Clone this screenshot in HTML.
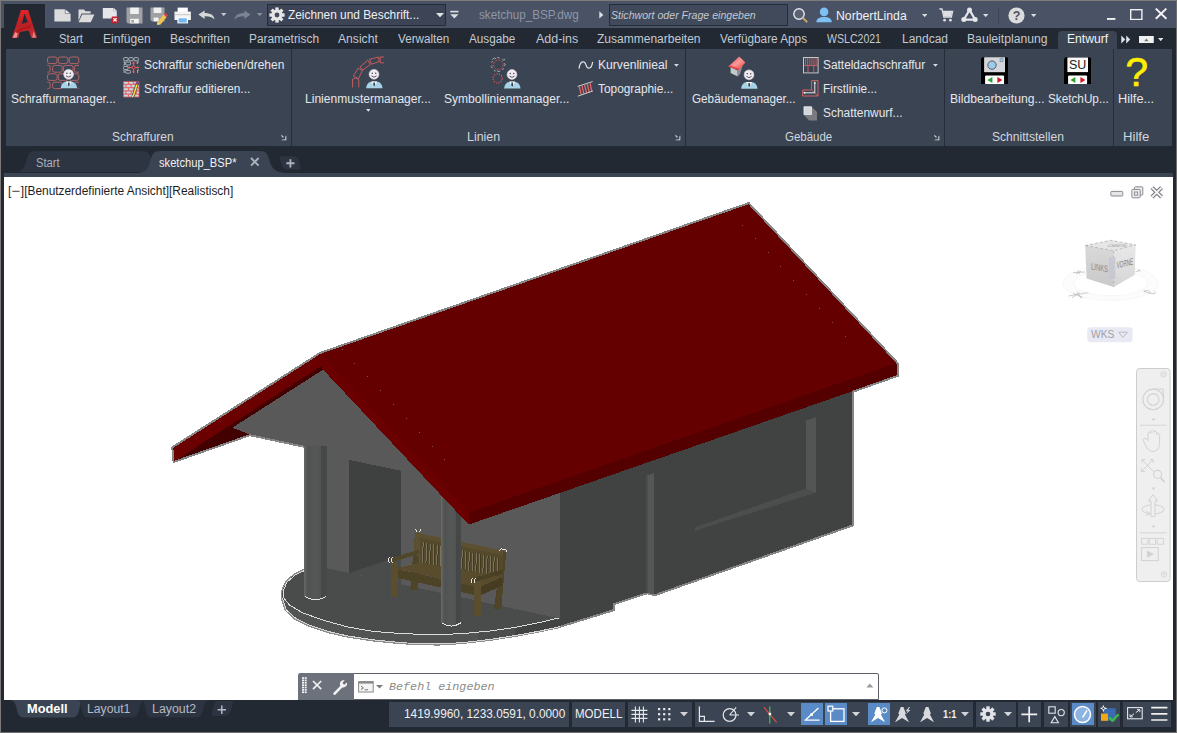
<!DOCTYPE html>
<html><head><meta charset="utf-8"><title>AutoCAD</title>
<style>
html,body{margin:0;padding:0;}
body{width:1177px;height:733px;overflow:hidden;position:relative;background:#222933;font-family:"Liberation Sans",sans-serif;}
#w{position:absolute;left:0;top:0;width:1177px;height:733px;overflow:hidden;}
#w>div,#w>svg,#w>span{position:absolute;}
.t{white-space:nowrap;transform-origin:0 50%;display:block;}
</style></head><body><div id="w">

<div style="left:0px;top:0px;width:1177px;height:733px;background:#707070;"></div>
<div style="left:0px;top:0px;width:1176px;height:1px;background:#7d7c79;"></div>
<div style="left:0px;top:0px;width:1px;height:732px;background:#7b7a78;"></div>
<div style="left:1px;top:1px;width:1175px;height:731px;background:#222933;"></div>
<div style="left:1px;top:1px;width:1175px;height:27px;background:#4a5265;"></div>
<div style="left:4px;top:4px;width:41px;height:24px;background:#222933;"></div>
<div style="left:266.5px;top:4px;width:179.5px;height:22px;background:#3c4455;box-sizing:border-box;border:1px solid #262c37;"></div>
<div style="left:608.5px;top:4px;width:179px;height:22px;background:#414a5b;box-sizing:border-box;border:1px solid #262c37;"></div>
<div style="left:998px;top:7px;width:1px;height:17px;background:#3c4456;"></div>
<div style="left:1058px;top:31px;width:58.8px;height:18px;background:#3b4453;border-radius:4px 4px 0 0;"></div>
<div style="left:6px;top:48.5px;width:1166px;height:97.5px;background:#3b4453;"></div>
<div style="left:291px;top:48.5px;width:1px;height:97.5px;background:#262d39;"></div>
<div style="left:685px;top:48.5px;width:1px;height:97.5px;background:#262d39;"></div>
<div style="left:944px;top:48.5px;width:1px;height:97.5px;background:#262d39;"></div>
<div style="left:1113px;top:48.5px;width:1px;height:97.5px;background:#262d39;"></div>
<div style="left:4px;top:172.5px;width:1169px;height:4.5px;background:#3b4453;"></div>
<svg style="left:14px;top:150px" width="150" height="23" viewBox="0 0 150 23"><path d="M0 22 C8 22 10 19 12 12 C14 4 16 1 22 1 L128 1 C134 1 136 4 138 12 C140 19 142 22 150 22 Z" fill="#2e3542"/></svg>
<svg style="left:138px;top:150px" width="150" height="23" viewBox="0 0 150 23"><path d="M0 23 C8 22 10 19 12 12 C14 4 16 1 22 1 L122 1 C128 1 130 4 132 12 C134 19 138 22 146 23 Z" fill="#3b4453"/></svg>
<svg style="left:277px;top:156px" width="26" height="14" viewBox="0 0 26 14"><path d="M2 0.2 L17 0.2 C21 0.2 23 7 24 13.4 L9 13.4 C4.5 13.4 4 5 2 0.2 Z" fill="#2e3542"/></svg>
<div style="left:4px;top:177px;width:1169px;height:523px;background:#ffffff;"></div>
<svg style="left:10px;top:700px" width="76" height="18" viewBox="0 0 76 18"><path d="M0 0 L76 0 C71 0 70 6 69 10 C68 15 66 17.5 62 17.5 L14 17.5 C10 17.5 8 15 7 10 C6 6 5 0 0 0 Z" fill="#3b4453"/></svg>
<svg style="left:74px;top:700px" width="76" height="18" viewBox="0 0 76 18"><path d="M4 0 L72 0 C67 0 66 6 65 10 C64 15 62 17.5 58 17.5 L14 17.5 C10 17.5 9 15 8 10 C7 6 6 0 4 0 Z" fill="#2d3441"/></svg>
<svg style="left:138px;top:700px" width="76" height="18" viewBox="0 0 76 18"><path d="M4 0 L72 0 C67 0 66 6 65 10 C64 15 62 17.5 58 17.5 L14 17.5 C10 17.5 9 15 8 10 C7 6 6 0 4 0 Z" fill="#2d3441"/></svg>
<svg style="left:208px;top:701px" width="26" height="16" viewBox="0 0 26 16"><path d="M8 0 L25 0 C24 8 22 15 17 15 L3 15 C5 12 5 3 8 0 Z" fill="#2d3441"/></svg>
<div style="left:388.9px;top:702px;width:179.8px;height:24.5px;background:#3b4453;"></div>
<div style="left:571.9px;top:702px;width:53.1px;height:24.5px;background:#3b4453;"></div>
<div style="left:628px;top:702px;width:63.7px;height:24.5px;background:#3b4453;"></div>
<div style="left:694.8px;top:702px;width:169.2px;height:24.5px;background:#3b4453;"></div>
<div style="left:864.3px;top:702px;width:108.3px;height:24.5px;background:#3b4453;"></div>
<div style="left:975.8px;top:702px;width:39.9px;height:24.5px;background:#3b4453;"></div>
<div style="left:1017.5px;top:702px;width:23.5px;height:24.5px;background:#3b4453;"></div>
<div style="left:1044px;top:702px;width:24.2px;height:24.5px;background:#3b4453;"></div>
<div style="left:1069.5px;top:702px;width:26.5px;height:24.5px;background:#3b4453;"></div>
<div style="left:1097.8px;top:702px;width:22.2px;height:24.5px;background:#3b4453;"></div>
<div style="left:1123px;top:702px;width:48px;height:24.5px;background:#3b4453;"></div>
<div style="left:801px;top:702.7px;width:21.8px;height:22.5px;background:#5a8bc6;"></div>
<div style="left:824.7px;top:702.7px;width:22.3px;height:22.5px;background:#5a8bc6;"></div>
<div style="left:867.5px;top:702.7px;width:22.7px;height:22.5px;background:#5a8bc6;"></div>
<div style="left:1071.7px;top:702.7px;width:22.6px;height:22.5px;background:#5a8bc6;"></div>
<div style="left:298px;top:672.8px;width:580.5px;height:27.2px;background:#ffffff;box-sizing:border-box;border:1px solid #5c5f66;border-radius:3px 2px 0 0;"></div>
<div style="left:298px;top:672.8px;width:55.8px;height:27.2px;background:#6c717b;border-radius:3px 0 0 0;"></div>
<svg style="left:0;top:0" width="1177" height="733" viewBox="0 0 1177 733" shape-rendering="crispEdges">
<polygon points="282,590 282.3,597.8 286.2,609.5 295.9,618.5 308.9,625 328.3,631.5 347.8,636 373.7,639.9 399.6,642.5 420,643.8 440,644 462.4,642.6 490,639.5 514.9,635.6 540,631 561,626.4 561,617 561,617.4 540,622.5 514.9,627.4 490,631 462.4,633.6 440,634.6 420,634.3 399.6,633.4 373.7,631.5 347.8,627 321.9,619.8 302.4,612.7 289.4,604.9 283.6,597.8 283,591.3 286.9,582.2 295.9,574.4 306.9,569.5" fill="#525454" />
<polygon points="478,632.4 514.9,627.4 514.9,635.6 478,641" fill="#4c4e4e" />
<polygon points="514.9,627.4 540,622.5 561,617.4 561,626.4 540,631 514.9,635.6" fill="#424444" />
<polygon points="306.9,569.5 295.9,574.4 286.9,582.2 283,591.3 283.6,597.8 289.4,604.9 302.4,612.7 321.9,619.8 347.8,627 373.7,631.5 399.6,633.4 420,634.3 440,634.6 462.4,633.6 490,631 514.9,627.4 540,622.5 561,617.4 561,560 306.9,560" fill="#4a4c4c" />
<polygon points="305.79999999999995,568.7 294.79999999999995,573.6 285.79999999999995,581.4000000000001 281.9,590.5 281.2,594 283.6,597.8 283,591.3 286.9,582.2 295.9,574.4 306.9,569.5" fill="#4a4c4c" />
<polyline points="305.79999999999995,568.7 294.79999999999995,573.6 285.79999999999995,581.4000000000001 281.9,590.5 281.2,594 281.40000000000003,598.6999999999999 285.3,610.4 295.0,619.4 308.0,625.9 327.40000000000003,632.4 346.90000000000003,636.9 372.8,640.8 398.70000000000005,643.4 419.1,644.6999999999999 439.1,644.9 461.5,643.5 489.1,640.4 514.0,636.5 539.1,631.9 560.1,627.3" fill="none" stroke="#8c8c8c" stroke-width="1.3" />
<polyline points="282.3,597.8 286.2,609.5 295.9,618.5 308.9,625 328.3,631.5 347.8,636 373.7,639.9 399.6,642.5 420,643.8 440,644 462.4,642.6 490,639.5 514.9,635.6 540,631 561,626.4" fill="none" stroke="#d8d8d8" stroke-width="1" />
<polyline points="306.9,569.5 295.9,574.4 286.9,582.2 283,591.3 283.6,597.8 289.4,604.9 302.4,612.7 321.9,619.8 347.8,627 373.7,631.5 399.6,633.4 420,634.3 440,634.6 462.4,633.6 490,631 514.9,627.4 540,622.5 561,617.4" fill="none" stroke="#dcdcdc" stroke-width="1" />
<polygon points="322.5,367.5 230.5,427.5 249.9,434.8 304,446.4 304,563.3 559.9,618.6 559.9,470 468,500" fill="#595959" />
<polygon points="349.1,459.9 400.8,470.7 400.8,555.8 349.1,573" fill="#3f4141" />
<polygon points="349.1,573 400.8,555.8 400.8,584.3" fill="#4a4c4c" />
<polygon points="559.9,480 853.6,380 853.6,524.9 654.8,594.9 647.3,592.9 613.6,603.9 613.6,609.9 559.9,626.3" fill="#414343" />
<polyline points="853.3,391 853.3,525.2 654.8,595.2 647.3,593.2 613.6,604.2 613.6,610.2 559.9,626.8" fill="none" stroke="#858585" stroke-width="2" />
<polygon points="647.3,475.5 654.3,473.2 654.3,594.6 647.3,592.7" fill="#555757" />
<polygon points="646.3,476 647.5,475.5 647.5,592.9 646.3,593.3" fill="#4b4d4d" />
<polygon points="806.1,420.3 815.8,417.2 815.8,492.6 806.1,489.6" fill="#535555" />
<polygon points="806.1,488.6 815.8,492.6 694.9,530.8 694.9,527.4" fill="#4c4e4e" />
<defs><linearGradient id="cg" x1="0" x2="1" y1="0" y2="0"><stop offset="0" stop-color="#686a6a"/><stop offset="0.07" stop-color="#5a5c5c"/><stop offset="0.18" stop-color="#505252"/><stop offset="0.45" stop-color="#565858"/><stop offset="0.74" stop-color="#525454"/><stop offset="0.76" stop-color="#454747"/><stop offset="1" stop-color="#474949"/></linearGradient></defs>
<path d="M304.2 446.4 L326.6 446.4 L326.6 596.5 Q315.4 603.5 304.2 596.5 Z" fill="url(#cg)"/>
<path d="M304.8 596.3 Q315.4 603.3 326.2 596.3" fill="none" stroke="#e4e4e4" stroke-width="1"/>
<polygon points="415.1,532.2 420.8,533.4 417.5,590.2 410.2,589.4" fill="#4e4428" />
<polygon points="501.8,551 506.2,552 501.2,609.5 494,608.5" fill="#4e4428" />
<polygon points="415.1,532.2 420.8,533.4 419.6,556 413.6,555" fill="#5c5030" />
<polygon points="419.5,537.5 502.5,554.8 502.5,578 419.5,563.5" fill="#55492b" />
<line x1="423.2" y1="542.3" x2="422.4" y2="562.6" stroke="#77735f" stroke-width="1"/>
<line x1="424.2" y1="542.3" x2="423.4" y2="562.6" stroke="#443b21" stroke-width="1"/>
<line x1="426.8" y1="543.0" x2="425.9" y2="563.3" stroke="#77735f" stroke-width="1"/>
<line x1="427.8" y1="543.0" x2="426.9" y2="563.3" stroke="#443b21" stroke-width="1"/>
<line x1="430.3" y1="543.8" x2="429.5" y2="563.9" stroke="#77735f" stroke-width="1"/>
<line x1="431.3" y1="543.8" x2="430.5" y2="563.9" stroke="#443b21" stroke-width="1"/>
<line x1="433.9" y1="544.5" x2="433.1" y2="564.5" stroke="#77735f" stroke-width="1"/>
<line x1="434.9" y1="544.5" x2="434.1" y2="564.5" stroke="#443b21" stroke-width="1"/>
<line x1="437.4" y1="545.2" x2="436.6" y2="565.1" stroke="#77735f" stroke-width="1"/>
<line x1="438.4" y1="545.2" x2="437.6" y2="565.1" stroke="#443b21" stroke-width="1"/>
<line x1="441.0" y1="546.0" x2="440.2" y2="565.7" stroke="#77735f" stroke-width="1"/>
<line x1="442.0" y1="546.0" x2="441.2" y2="565.7" stroke="#443b21" stroke-width="1"/>
<line x1="444.5" y1="546.7" x2="443.7" y2="566.4" stroke="#77735f" stroke-width="1"/>
<line x1="445.5" y1="546.7" x2="444.7" y2="566.4" stroke="#443b21" stroke-width="1"/>
<line x1="448.1" y1="547.4" x2="447.3" y2="567.0" stroke="#77735f" stroke-width="1"/>
<line x1="449.1" y1="547.4" x2="448.3" y2="567.0" stroke="#443b21" stroke-width="1"/>
<line x1="451.6" y1="548.2" x2="450.8" y2="567.6" stroke="#77735f" stroke-width="1"/>
<line x1="452.6" y1="548.2" x2="451.8" y2="567.6" stroke="#443b21" stroke-width="1"/>
<line x1="455.2" y1="548.9" x2="454.4" y2="568.2" stroke="#77735f" stroke-width="1"/>
<line x1="456.2" y1="548.9" x2="455.4" y2="568.2" stroke="#443b21" stroke-width="1"/>
<line x1="458.7" y1="549.7" x2="457.9" y2="568.8" stroke="#77735f" stroke-width="1"/>
<line x1="459.7" y1="549.7" x2="458.9" y2="568.8" stroke="#443b21" stroke-width="1"/>
<line x1="462.3" y1="550.4" x2="461.5" y2="569.5" stroke="#77735f" stroke-width="1"/>
<line x1="463.3" y1="550.4" x2="462.5" y2="569.5" stroke="#443b21" stroke-width="1"/>
<line x1="465.8" y1="551.1" x2="465.0" y2="570.1" stroke="#77735f" stroke-width="1"/>
<line x1="466.8" y1="551.1" x2="466.0" y2="570.1" stroke="#443b21" stroke-width="1"/>
<line x1="469.4" y1="551.9" x2="468.6" y2="570.7" stroke="#77735f" stroke-width="1"/>
<line x1="470.4" y1="551.9" x2="469.6" y2="570.7" stroke="#443b21" stroke-width="1"/>
<line x1="472.9" y1="552.6" x2="472.1" y2="571.3" stroke="#77735f" stroke-width="1"/>
<line x1="473.9" y1="552.6" x2="473.1" y2="571.3" stroke="#443b21" stroke-width="1"/>
<line x1="476.5" y1="553.4" x2="475.7" y2="571.9" stroke="#77735f" stroke-width="1"/>
<line x1="477.5" y1="553.4" x2="476.7" y2="571.9" stroke="#443b21" stroke-width="1"/>
<line x1="480.0" y1="554.1" x2="479.2" y2="572.6" stroke="#77735f" stroke-width="1"/>
<line x1="481.0" y1="554.1" x2="480.2" y2="572.6" stroke="#443b21" stroke-width="1"/>
<line x1="483.6" y1="554.8" x2="482.8" y2="573.2" stroke="#77735f" stroke-width="1"/>
<line x1="484.6" y1="554.8" x2="483.8" y2="573.2" stroke="#443b21" stroke-width="1"/>
<line x1="487.1" y1="555.6" x2="486.3" y2="573.8" stroke="#77735f" stroke-width="1"/>
<line x1="488.1" y1="555.6" x2="487.3" y2="573.8" stroke="#443b21" stroke-width="1"/>
<line x1="490.7" y1="556.3" x2="489.9" y2="574.4" stroke="#77735f" stroke-width="1"/>
<line x1="491.7" y1="556.3" x2="490.9" y2="574.4" stroke="#443b21" stroke-width="1"/>
<line x1="494.2" y1="557.1" x2="493.4" y2="575.1" stroke="#77735f" stroke-width="1"/>
<line x1="495.2" y1="557.1" x2="494.4" y2="575.1" stroke="#443b21" stroke-width="1"/>
<line x1="497.8" y1="557.8" x2="497.0" y2="575.7" stroke="#77735f" stroke-width="1"/>
<line x1="498.8" y1="557.8" x2="498.0" y2="575.7" stroke="#443b21" stroke-width="1"/>
<polygon points="418.7,533.2 503.4,550.6 503.4,555 418.7,537.6" fill="#5c5030" />
<polygon points="396,568.5 419.5,562.5 502,577.3 479,587.4" fill="#584c2c" />
<polygon points="395.8,568.8 479,587.3 479,596 395.8,577.5" fill="#4c4226" />
<polygon points="479,587.3 501.5,577.5 501.5,586 479,596" fill="#463c22" />
<polygon points="390.7,558.3 418.7,549.8 418.7,554 390.7,562.6" fill="#50462a" />
<polygon points="391.2,561.5 397.9,561.5 397.9,596.8 391.2,596.8" fill="#5a4e2e" />
<polygon points="471.7,578.5 503.2,569.2 503.2,573.5 471.7,583" fill="#4a4026" />
<polygon points="474,581 481,581 481,616.2 474,616.2" fill="#5a4e2e" />
<path d="M389.5 557.5 q-2.5 2.5 0 5.5 M392.5 557.5 q-2.5 2.5 0 5.5" fill="none" stroke="#e8e4d8" stroke-width="1"/>
<path d="M472.5 578.0 q-2.5 2.5 0 5.5 M475.5 578.0 q-2.5 2.5 0 5.5" fill="none" stroke="#e8e4d8" stroke-width="1"/>
<path d="M415.5 529.5 l1.5 2.5 M420.8 529.5 l-1.5 2.5" fill="none" stroke="#e8e4d8" stroke-width="1"/>
<path d="M499.5 551 q1.5 -3.5 3.5 -1 q2 -2.5 3.8 1.5" fill="none" stroke="#e8e4d8" stroke-width="1"/>
<path d="M441.4 480 L461.2 480 L461.2 623 Q451.3 629.6 441.4 623 Z" fill="url(#cg)"/>
<path d="M441.9 622.8 Q451.3 629.4 460.8 622.8" fill="none" stroke="#e4e4e4" stroke-width="1"/>
<polygon points="173.7,461.5 320,360 323.3,369.5 232.4,427.7 249.9,434.6" fill="#430000" />
<polygon points="320.5,353 171.7,447.4 173.7,461.8 321,366.1" fill="#6a0000" />
<polygon points="319,353.2 324,351.6 473,511 468.7,524.6 323.3,369.9 320.6,366" fill="#6a0000" />
<polygon points="468.7,510.5 897,360.6 898,375.4 468.7,524.6" fill="#550000" />
<polygon points="320,353.3 748.7,203.3 897,362.8 468.7,512.5" fill="#640000" />
<polyline points="171.9,447.6 320,353 748.7,203.1 896.5,361.8 897.8,363.9 897.8,375.8 853.6,391.5" fill="none" stroke="#868686" stroke-width="2" />
<polyline points="172.2,446.5 173.6,462 249.9,435.2 304,446.8" fill="none" stroke="#868686" stroke-width="2" />
<rect x="741.7" y="224.5" width="1" height="1" fill="#7c5252"/>
<rect x="341.6" y="348.7" width="1" height="1" fill="#7c5252"/>
<rect x="754.6" y="238.4" width="1" height="1" fill="#7c5252"/>
<rect x="354.4" y="362.5" width="1" height="1" fill="#7c5252"/>
<rect x="767.5" y="252.4" width="1" height="1" fill="#7c5252"/>
<rect x="367.3" y="376.4" width="1" height="1" fill="#7c5252"/>
<rect x="780.4" y="266.4" width="1" height="1" fill="#7c5252"/>
<rect x="380.1" y="390.2" width="1" height="1" fill="#7c5252"/>
<rect x="793.3" y="280.3" width="1" height="1" fill="#7c5252"/>
<rect x="393.0" y="404.1" width="1" height="1" fill="#7c5252"/>
<rect x="806.2" y="294.2" width="1" height="1" fill="#7c5252"/>
<rect x="405.8" y="417.9" width="1" height="1" fill="#7c5252"/>
<rect x="819.0" y="308.2" width="1" height="1" fill="#7c5252"/>
<rect x="418.6" y="431.7" width="1" height="1" fill="#7c5252"/>
<rect x="831.9" y="322.1" width="1" height="1" fill="#7c5252"/>
<rect x="431.5" y="445.6" width="1" height="1" fill="#7c5252"/>
<rect x="844.8" y="336.1" width="1" height="1" fill="#7c5252"/>
<rect x="444.3" y="459.4" width="1" height="1" fill="#7c5252"/>
</svg>
<svg style="left:8px;top:6px" width="34" height="36" viewBox="0 0 34 36" >
<defs><linearGradient id="ag" x1="0" x2="0" y1="0" y2="1"><stop offset="0" stop-color="#e42428"/><stop offset="0.55" stop-color="#b82024"/><stop offset="1" stop-color="#c83438"/></linearGradient></defs>
<path d="M13 4.1 L20.1 4.1 L29.1 31.7 L23.3 31.7 L20.7 24.4 L11.7 25.9 L10.3 31.7 L4 31.7 Z" fill="url(#ag)"/>
<path d="M16.55 7.6 L13.8 18 L19.8 16.1 Z" fill="#222933"/>
<path d="M8.8 24.6 C12 22.2 18 20.6 22 19.6 L22.9 22.2 C18 23 12.6 24.6 8.2 27 Z" fill="#b2191d"/>
<path d="M4.6 31.7 L8.6 31.7 L9.6 27.6 L7.4 26 Z" fill="#f2a4a4" opacity="0.85"/><path d="M24.2 31.7 L28 31.7 L25.6 25 Z" fill="#ee9494" opacity="0.8"/>
</svg>
<svg style="left:53.5px;top:8.5px" width="17" height="13" viewBox="0 0 17 13" ><path d="M0.4 0.3 L11.2 0.3 L16.6 4.4 L16.6 12.6 L0.4 12.6 Z" fill="#dcdcdc"/><path d="M11.2 0.3 L11.2 4.4 L16.6 4.4 Z" fill="#f6f6f6" stroke="#4a5265" stroke-width="0.6"/></svg>
<svg style="left:77.5px;top:8.5px" width="17" height="14" viewBox="0 0 17 14" ><path d="M0.5 0.4 L6 0.4 L7.5 2.3 L12.6 2.3 L12.6 4.6 L3.5 4.6 L0.5 12 Z" fill="#dcdcdc"/><path d="M4.2 5.6 L16.4 5.6 L12.8 13.2 L0.6 13.2 Z" fill="#dcdcdc"/></svg>
<svg style="left:101.5px;top:6.5px" width="18" height="17" viewBox="0 0 18 17" ><path d="M0.8 1 L11.5 1 L14.8 4 L14.8 11.5 L0.8 11.5 Z" fill="#e4e6ea"/><path d="M11.5 1 L11.5 4 L14.8 4 Z" fill="#ffffff" stroke="#8890a0" stroke-width="0.5"/>
<rect x="9.6" y="9.4" width="6.8" height="6.8" rx="1" fill="#c8202a"/><path d="M11.4 11.2 L14.6 14.4 M14.6 11.2 L11.4 14.4" stroke="#ffffff" stroke-width="1.3"/></svg>
<svg style="left:125.5px;top:6.5px" width="17" height="17" viewBox="0 0 17 17" ><path d="M0.5 0.6 L16.5 0.6 L16.5 16.4 L2 16.4 L0.5 14.9 Z" fill="#9fa1a5"/><rect x="4.2" y="0.6" width="8.6" height="6.4" fill="#f0f0f0"/><rect x="4.2" y="11.8" width="8.6" height="4.6" fill="#f4f4f4"/><rect x="5.4" y="13" width="2.6" height="2.6" fill="#9fa1a5"/></svg>
<svg style="left:149.5px;top:6.5px" width="18" height="18" viewBox="0 0 18 18" ><path d="M0.5 0.6 L14.5 0.6 L14.5 14.4 L2 14.4 L0.5 12.9 Z" fill="#9fa1a5"/><rect x="3.6" y="0.6" width="7.8" height="5.4" fill="#f0f0f0"/><rect x="3.6" y="10.6" width="5" height="3.8" fill="#f4f4f4"/>
<path d="M7.6 15.3 L13.6 7.6 L16.6 10 L10.6 17.4 L7.2 17.8 Z" fill="#f0c44c"/><path d="M13.6 7.6 L15 5.9 L17.9 8.3 L16.6 10 Z" fill="#e8404a"/><path d="M7.6 15.3 L7.2 17.8 L9.6 17.2 Z" fill="#f4e8d0"/></svg>
<svg style="left:173.5px;top:6.5px" width="18" height="17" viewBox="0 0 18 17" ><rect x="3.6" y="0.6" width="10.2" height="5" fill="#ffffff"/><path d="M0.5 4.6 L16.9 4.6 L16.9 13 L0.5 13 Z" fill="#f4f4f4"/><rect x="0.5" y="7.2" width="16.4" height="1" fill="#c8c8c8"/><rect x="3.4" y="10.4" width="10.6" height="6" fill="#ffffff"/><rect x="4.6" y="11.2" width="8.2" height="4.4" fill="#74b8f0"/></svg>
<svg style="left:197.5px;top:9.5px" width="17" height="10" viewBox="0 0 17 10" ><path d="M0.4 4.6 L6.6 0.4 L6.6 3 C12.5 3 16 5 16.5 9.6 C14 6.6 11 6.2 6.6 6.3 L6.6 8.9 Z" fill="#d8d8d8"/></svg>
<svg style="left:220.9px;top:12.700000000000001px" width="5.4" height="3.2" viewBox="0 0 5.4 3.2" ><path d="M0 0 L5.4 0 L2.7 3.2 Z" fill="#c4c8d0"/></svg>
<svg style="left:233.5px;top:9.5px" width="17" height="10" viewBox="0 0 17 10" ><path d="M16.6 4.6 L10.4 0.4 L10.4 3 C4.5 3 1 5 0.5 9.6 C3 6.6 6 6.2 10.4 6.3 L10.4 8.9 Z" fill="#7c8392"/></svg>
<svg style="left:256.8px;top:12.700000000000001px" width="5.4" height="3.2" viewBox="0 0 5.4 3.2" ><path d="M0 0 L5.4 0 L2.7 3.2 Z" fill="#8a91a0"/></svg>
<svg style="left:269px;top:6.5px" width="16" height="16" viewBox="0 0 16 16" ><g transform="translate(8,8)"><rect x="-1.7" y="-7.6" width="3.4" height="3.6" transform="rotate(0)" fill="#e6e6e6"/><rect x="-1.7" y="-7.6" width="3.4" height="3.6" transform="rotate(45)" fill="#e6e6e6"/><rect x="-1.7" y="-7.6" width="3.4" height="3.6" transform="rotate(90)" fill="#e6e6e6"/><rect x="-1.7" y="-7.6" width="3.4" height="3.6" transform="rotate(135)" fill="#e6e6e6"/><rect x="-1.7" y="-7.6" width="3.4" height="3.6" transform="rotate(180)" fill="#e6e6e6"/><rect x="-1.7" y="-7.6" width="3.4" height="3.6" transform="rotate(225)" fill="#e6e6e6"/><rect x="-1.7" y="-7.6" width="3.4" height="3.6" transform="rotate(270)" fill="#e6e6e6"/><rect x="-1.7" y="-7.6" width="3.4" height="3.6" transform="rotate(315)" fill="#e6e6e6"/><circle r="5.6" fill="#e6e6e6"/><circle r="2.4" fill="#434b5d"/></g></svg>
<svg style="left:436.2px;top:13.100000000000001px" width="8" height="4.4" viewBox="0 0 8 4.4" ><path d="M0 0 L8 0 L4.0 4.4 Z" fill="#e0e2e6"/></svg>
<svg style="left:449.5px;top:10px" width="9" height="9" viewBox="0 0 9 9" ><rect x="0.3" y="0.8" width="8.2" height="1.6" fill="#dcdfe4"/><path d="M0.3 4.2 L8.5 4.2 L4.4 8.4 Z" fill="#dcdfe4"/></svg>
<svg style="left:598.8px;top:11px" width="5" height="8" viewBox="0 0 5 8" ><path d="M0.3 0.3 L4.3 3.9 L0.3 7.5 Z" fill="#dfe2e6"/></svg>
<svg style="left:792px;top:7px" width="17" height="17" viewBox="0 0 17 17" ><circle cx="7" cy="7" r="5.2" fill="#5a6274" stroke="#e4e6ea" stroke-width="1.4"/><path d="M10.8 10.8 L15.2 15.2" stroke="#c9a06a" stroke-width="2"/></svg>
<svg style="left:816px;top:6.5px" width="16" height="17" viewBox="0 0 16 17" ><circle cx="8.1" cy="4.9" r="4.3" fill="#7dc0f4"/><path d="M0.3 15.2 C0.5 11.4 3.4 9.9 8.1 9.9 C12.8 9.9 15.6 11.4 15.8 15.2 Z" fill="#7dc0f4"/></svg>
<svg style="left:921.6999999999999px;top:13.9px" width="5.4" height="3.2" viewBox="0 0 5.4 3.2" ><path d="M0 0 L5.4 0 L2.7 3.2 Z" fill="#d8dbe0"/></svg>
<svg style="left:938.5px;top:8px" width="15" height="15" viewBox="0 0 15 15" ><path d="M0.4 1 L3 1 L4.8 9 L12.4 9 L13.6 3.4 L3.6 3.4" fill="none" stroke="#dcdfe4" stroke-width="1.3"/><path d="M4 4 L13 4 L12 8.4 L5 8.4 Z" fill="#dcdfe4"/><circle cx="5.6" cy="12.2" r="1.4" fill="#dcdfe4"/><circle cx="11.4" cy="12.2" r="1.4" fill="#dcdfe4"/></svg>
<svg style="left:961px;top:7px" width="17" height="16" viewBox="0 0 17 16" ><path d="M8.5 3 L2.8 12.6 L14.2 12.6 Z" fill="none" stroke="#e4e6ea" stroke-width="2.2"/><circle cx="8.5" cy="3" r="2.5" fill="#e4e6ea"/><circle cx="2.8" cy="12.6" r="2.5" fill="#e4e6ea"/><circle cx="14.2" cy="12.6" r="2.5" fill="#e4e6ea"/></svg>
<svg style="left:982.8px;top:13.700000000000001px" width="5.4" height="3.2" viewBox="0 0 5.4 3.2" ><path d="M0 0 L5.4 0 L2.7 3.2 Z" fill="#d8dbe0"/></svg>
<svg style="left:1007.5px;top:6.6px" width="17" height="17" viewBox="0 0 17 17" ><circle cx="8.5" cy="8.5" r="8.1" fill="#dcdcdc"/><text x="8.5" y="13" text-anchor="middle" font-family="Liberation Sans" font-weight="bold" font-size="12.5" fill="#4a5265">?</text></svg>
<svg style="left:1030.8999999999999px;top:13.700000000000001px" width="5.4" height="3.2" viewBox="0 0 5.4 3.2" ><path d="M0 0 L5.4 0 L2.7 3.2 Z" fill="#d8dbe0"/></svg>
<svg style="left:1107px;top:17.5px" width="9" height="2.2" viewBox="0 0 9 2.2" ><rect width="8.4" height="1.9" fill="#f0f0f0"/></svg>
<svg style="left:1129.8px;top:9px" width="13" height="11.4" viewBox="0 0 13 11.4" ><rect x="0.7" y="0.7" width="11.2" height="9.8" fill="none" stroke="#f0f0f0" stroke-width="1.4"/></svg>
<svg style="left:1154.5px;top:8px" width="12.4" height="11.6" viewBox="0 0 12.4 11.6" ><path d="M0.8 0.6 L11.4 10.8 M11.4 0.6 L0.8 10.8" stroke="#f4f4f4" stroke-width="1.95"/></svg>
<svg style="left:1121px;top:34.6px" width="10" height="9" viewBox="0 0 10 9" ><path d="M0.3 0.4 L4.3 4.4 L0.3 8.4 Z M5.2 0.4 L9.2 4.4 L5.2 8.4 Z" fill="#dfe2e6"/></svg>
<svg style="left:1139px;top:35.6px" width="15" height="7.4" viewBox="0 0 15 7.4" ><rect width="14.8" height="7.2" fill="#f0f0f0"/><path d="M5.2 5.2 L9.6 5.2 L7.4 2.4 Z" fill="#70747c"/></svg>
<svg style="left:1157.8px;top:37.9px" width="5.4" height="3.2" viewBox="0 0 5.4 3.2" ><path d="M0 0 L5.4 0 L2.7 3.2 Z" fill="#dfe2e6"/></svg>
<svg style="left:46px;top:55px" width="34" height="35" viewBox="0 0 34 35" ><rect x="1.5" y="2.0" width="9.6" height="6.6" rx="2" fill="none" stroke="#c66a68" stroke-width="0.85"/><rect x="12.3" y="2.0" width="9.6" height="6.6" rx="2" fill="none" stroke="#c66a68" stroke-width="0.85"/><rect x="23.2" y="2.0" width="9.6" height="6.6" rx="2" fill="none" stroke="#c66a68" stroke-width="0.85"/><rect x="6.6" y="10.399999999999999" width="9.6" height="6.8" rx="2" fill="none" stroke="#c66a68" stroke-width="0.85"/><rect x="17.4" y="10.399999999999999" width="9.6" height="6.8" rx="2" fill="none" stroke="#c66a68" stroke-width="0.85"/><path d="M1.3 10.399999999999999 L2.4 10.399999999999999 Q4.2 10.399999999999999 4.2 12.2 L4.2 15.399999999999999 Q4.2 17.2 2.4 17.2 L1.3 17.2" fill="none" stroke="#c66a68" stroke-width="0.85"/><path d="M33 10.399999999999999 L30.2 10.399999999999999 Q28.4 10.399999999999999 28.4 12.2 L28.4 15.399999999999999 Q28.4 17.2 30.2 17.2 L33 17.2" fill="none" stroke="#c66a68" stroke-width="0.85"/><rect x="1.5" y="18.8" width="9.6" height="6.6" rx="2" fill="none" stroke="#c66a68" stroke-width="0.85"/><rect x="12.3" y="18.8" width="9.6" height="6.6" rx="2" fill="none" stroke="#c66a68" stroke-width="0.85"/><rect x="23.2" y="18.8" width="9.6" height="6.6" rx="2" fill="none" stroke="#c66a68" stroke-width="0.85"/><rect x="6.6" y="27.2" width="9.6" height="6.4" rx="2" fill="none" stroke="#c66a68" stroke-width="0.85"/><path d="M1.3 27.2 L2.4 27.2 Q4.2 27.2 4.2 29.0 L4.2 31.8 Q4.2 33.6 2.4 33.6 L1.3 33.6" fill="none" stroke="#c66a68" stroke-width="0.85"/><path d="M29 27.2 L33 27.2 M31.5 33.2 L33 33.2" fill="none" stroke="#c66a68" stroke-width="0.85"/><rect x="14" y="14.5" width="18" height="19.5" fill="#3b4453" opacity="0.0"/><path d="M14.7 33.2 C15.2 28.7 17.7 26.8 20.7 26.5 L24.7 26.5 C28.2 26.8 30.7 28.7 31.099999999999998 33.2 Z" fill="#a6d3e8"/><path d="M19.9 26.4 L22.8 32.2 L25.7 26.4 Z" fill="#f6f7f9"/><path d="M22.0 27.4 L23.599999999999998 27.4 L23.7 30.0 L22.8 31.8 L21.9 30.0 Z" fill="#3a3f48"/><circle cx="22.599999999999998" cy="19.3" r="4.9" fill="#f2ecf2" stroke="#d9d2dc" stroke-width="0.6"/><circle cx="20.9" cy="18.2" r="0.75" fill="#4a4a55"/><circle cx="24.3" cy="18.2" r="0.75" fill="#4a4a55"/><path d="M20.0 20.8 Q22.599999999999998 23.599999999999998 25.2 20.8" fill="none" stroke="#4a4a55" stroke-width="0.9"/></svg>
<svg style="left:122.8px;top:56.6px" width="17" height="17" viewBox="0 0 17 17" ><rect x="0.6" y="0.6" width="4.4" height="3.2" rx="1" fill="none" stroke="#c8ccd2" stroke-width="0.8"/><rect x="5.8" y="0.6" width="4.4" height="3.2" rx="1" fill="none" stroke="#c8ccd2" stroke-width="0.8"/><rect x="11" y="0.6" width="4.4" height="3.2" rx="1" fill="none" stroke="#c8ccd2" stroke-width="0.8"/><rect x="2.6" y="5" width="5" height="3" rx="1" fill="none" stroke="#c8ccd2" stroke-width="0.8"/><rect x="0.6" y="9.4" width="4.4" height="3.2" rx="1" fill="none" stroke="#c8ccd2" stroke-width="0.8"/><rect x="2.6" y="13.4" width="5" height="2.8" rx="1" fill="none" stroke="#c8ccd2" stroke-width="0.8"/><path d="M0.4 5 L1.6 5 L1.6 8 L0.4 8 M16 5 L14.2 5 L14.2 7 M16 13 L14.6 13 L14.6 16 M0.4 13.4 L1.2 13.4 L1.2 16" fill="none" stroke="#c8ccd2" stroke-width="0.8"/><g stroke="#f05a5a" stroke-width="1.1" fill="#f05a5a"><path d="M10.6 5.4 L10.6 15.6 M5.6 10.5 L15.6 10.5" fill="none"/><path d="M10.6 4.2 L9 6.6 L12.2 6.6 Z M10.6 16.6 L9 14.4 L12.2 14.4 Z M4.6 10.5 L6.8 8.9 L6.8 12.1 Z M16.4 10.5 L14.2 8.9 L14.2 12.1 Z" stroke="none"/></g><circle cx="10.6" cy="10.5" r="1.6" fill="#3b4453" stroke="#f05a5a" stroke-width="0.9"/></svg>
<svg style="left:122.8px;top:80.6px" width="17" height="17" viewBox="0 0 17 17" ><rect x="0.3" y="0.3" width="16" height="16" fill="#e86a6a"/><rect x="0.8" y="0.9" width="4.2" height="1.9" rx="0.7" fill="#c6d9e4"/><rect x="6.0" y="0.9" width="4.2" height="1.9" rx="0.7" fill="#c6d9e4"/><rect x="11.2" y="0.9" width="4.2" height="1.9" rx="0.7" fill="#c6d9e4"/><rect x="0.6" y="4.1" width="1.8" height="1.9" rx="0.7" fill="#c6d9e4"/><rect x="3.4" y="4.1" width="4.2" height="1.9" rx="0.7" fill="#c6d9e4"/><rect x="8.6" y="4.1" width="4.2" height="1.9" rx="0.7" fill="#c6d9e4"/><rect x="13.8" y="4.1" width="2.2" height="1.9" rx="0.7" fill="#c6d9e4"/><rect x="0.8" y="7.3" width="4.2" height="1.9" rx="0.7" fill="#c6d9e4"/><rect x="6.0" y="7.3" width="4.2" height="1.9" rx="0.7" fill="#c6d9e4"/><rect x="11.2" y="7.3" width="4.2" height="1.9" rx="0.7" fill="#c6d9e4"/><rect x="0.6" y="10.5" width="1.8" height="1.9" rx="0.7" fill="#c6d9e4"/><rect x="3.4" y="10.5" width="4.2" height="1.9" rx="0.7" fill="#c6d9e4"/><rect x="8.6" y="10.5" width="4.2" height="1.9" rx="0.7" fill="#c6d9e4"/><rect x="13.8" y="10.5" width="2.2" height="1.9" rx="0.7" fill="#c6d9e4"/><rect x="0.8" y="13.7" width="4.2" height="1.9" rx="0.7" fill="#c6d9e4"/><rect x="6.0" y="13.7" width="4.2" height="1.9" rx="0.7" fill="#c6d9e4"/><rect x="11.2" y="13.7" width="4.2" height="1.9" rx="0.7" fill="#c6d9e4"/><path d="M9.2 14.6 L13 2.6 L15.2 3.4 L11.4 15.4 L9 16.4 Z" fill="#f6e23a" stroke="#3a3440" stroke-width="0.7"/><path d="M13 2.6 L13.7 0.6 L15.9 1.4 L15.2 3.4 Z" fill="#b040c0" stroke="#3a3440" stroke-width="0.5"/><path d="M9.2 14.6 L9 16.4 L10.6 15.6 Z" fill="#f0f0f0"/></svg>
<svg style="left:280.6px;top:134.8px" width="6" height="6" viewBox="0 0 6 6" ><path d="M0.4 0.4 L4.6 4.6" fill="none" stroke="#d4d6da" stroke-width="1.2"/><path d="M0.4 5.3 L5.3 5.3 L5.3 0.4 Z" fill="#e6e6e6"/><path d="M0.4 4.4 L4.4 4.4 L4.4 0.4 Z" fill="#3b4453"/></svg>
<svg style="left:351.5px;top:55px" width="34" height="35" viewBox="0 0 34 35" ><g fill="none" stroke="#d25f5c" stroke-width="0.9">
<path d="M0.6 32.4 L0.6 24.2 L3.8 22.8 L6.8 24.6 L6.8 32.4"/>
<path d="M1.4 21 L6.2 13.2 L10.4 15.4 L6.6 23.6 L3.6 22.4 Z"/>
<path d="M8 12 L15.6 5.2 L18.4 9.4 L11 15 Z"/>
<path d="M17.4 4.4 L26.4 2 L27.2 6.6 L19.6 9.2 Z"/>
<path d="M32 2 L28.2 2 L28.2 7.8 L32 7.8"/>
</g><path d="M14.1 33.2 C14.6 28.7 17.1 26.8 20.1 26.5 L24.1 26.5 C27.6 26.8 30.1 28.7 30.5 33.2 Z" fill="#a6d3e8"/><path d="M19.3 26.4 L22.200000000000003 32.2 L25.1 26.4 Z" fill="#f6f7f9"/><path d="M21.400000000000002 27.4 L23.0 27.4 L23.1 30.0 L22.200000000000003 31.8 L21.3 30.0 Z" fill="#3a3f48"/><circle cx="22.0" cy="19.3" r="4.9" fill="#f2ecf2" stroke="#d9d2dc" stroke-width="0.6"/><circle cx="20.3" cy="18.2" r="0.75" fill="#4a4a55"/><circle cx="23.700000000000003" cy="18.2" r="0.75" fill="#4a4a55"/><path d="M19.400000000000002 20.8 Q22.0 23.599999999999998 24.6 20.8" fill="none" stroke="#4a4a55" stroke-width="0.9"/></svg>
<svg style="left:365.5px;top:108.8px" width="4.6" height="2.8" viewBox="0 0 4.6 2.8" ><path d="M0 0 L4.6 0 L2.3 2.8 Z" fill="#d8dbe0"/></svg>
<svg style="left:490px;top:55px" width="34" height="35" viewBox="0 0 34 35" ><g transform="translate(0.2,1.2)"><circle cx="8.2" cy="8.6" r="4.8" fill="none" stroke="#d84848" stroke-width="0.9" stroke-dasharray="2.2 0.9"/>
<g stroke="#b8bcc4" stroke-width="0.8" fill="none"><path d="M2 3.4 l2.2 -1.6 l1.8 0.8 M7 1.2 l2.4 0.6 M12 2.8 l1.8 1.4 l0.8 -1.6 M14 7 l1.2 1.6 l-1.4 1 M13.4 12 l-1.2 1.8 M10 14.8 l-2.2 0.8 l-0.6 -1.2 M5.4 15 l-1.8 -1 M2.2 12 l-1.2 -1.8 l1 -1 M1.4 6.4 l0.8 -1.6"/></g></g>
<circle cx="7.6" cy="23.4" r="4.6" fill="none" stroke="#e05a58" stroke-width="1.2" stroke-dasharray="1.2 1.3"/><path d="M14.1 33.4 C14.6 28.9 17.1 27.0 20.1 26.7 L24.1 26.7 C27.6 27.0 30.1 28.9 30.5 33.4 Z" fill="#a6d3e8"/><path d="M19.3 26.599999999999998 L22.200000000000003 32.4 L25.1 26.599999999999998 Z" fill="#f6f7f9"/><path d="M21.400000000000002 27.599999999999998 L23.0 27.599999999999998 L23.1 30.2 L22.200000000000003 32.0 L21.3 30.2 Z" fill="#3a3f48"/><circle cx="22.0" cy="19.5" r="4.9" fill="#f2ecf2" stroke="#d9d2dc" stroke-width="0.6"/><circle cx="20.3" cy="18.4" r="0.75" fill="#4a4a55"/><circle cx="23.700000000000003" cy="18.4" r="0.75" fill="#4a4a55"/><path d="M19.400000000000002 21.0 Q22.0 23.799999999999997 24.6 21.0" fill="none" stroke="#4a4a55" stroke-width="0.9"/></svg>
<svg style="left:577.5px;top:59.5px" width="16" height="10" viewBox="0 0 16 10" ><path d="M1 8.6 C2.2 0.4 6.6 0.2 8 4.8 C9.4 9.6 13.6 9.6 14.6 1.8" fill="none" stroke="#e2e4e8" stroke-width="1.2"/></svg>
<svg style="left:674.4px;top:64.19999999999999px" width="4.8" height="2.8" viewBox="0 0 4.8 2.8" ><path d="M0 0 L4.8 0 L2.4 2.8 Z" fill="#d8dbe0"/></svg>
<svg style="left:576.6px;top:80px" width="17" height="18" viewBox="0 0 17 18" ><g stroke="#e86a6a" stroke-width="1.3"><path d="M2.2 6.4 L4.2 14.6"/><path d="M4.9 5.65 L6.9 13.85"/><path d="M7.6000000000000005 4.9 L9.600000000000001 13.1"/><path d="M10.3 4.15 L12.3 12.35"/><path d="M13.0 3.4000000000000004 L15.0 11.6"/></g><path d="M0.6 6.4 L15.6 1.6 M0.8 16.2 L15.8 11" stroke="#d8dade" stroke-width="0.9" fill="none"/></svg>
<svg style="left:674.8px;top:134.8px" width="6" height="6" viewBox="0 0 6 6" ><path d="M0.4 0.4 L4.6 4.6" fill="none" stroke="#d4d6da" stroke-width="1.2"/><path d="M0.4 5.3 L5.3 5.3 L5.3 0.4 Z" fill="#e6e6e6"/><path d="M0.4 4.4 L4.4 4.4 L4.4 0.4 Z" fill="#3b4453"/></svg>
<svg style="left:727.7px;top:55.6px" width="34" height="35" viewBox="0 0 34 35" ><defs><linearGradient id="rg" x1="0" x2="1" y1="0" y2="1"><stop offset="0" stop-color="#f03a3a"/><stop offset="0.5" stop-color="#f89a9a"/><stop offset="1" stop-color="#ee3030"/></linearGradient></defs>
<path d="M2.6 11.2 L9.6 14.4 L9.6 20.6 L2.6 17 Z" fill="#c4c8cc"/><path d="M9.6 14.4 L14.6 9.4 L12 18 L9.6 20.6 Z" fill="#8e9298"/>
<path d="M11.2 0.6 L17.4 6.6 L10.8 14 L0.4 10.4 Z" fill="url(#rg)"/><path d="M0.4 10.4 L10.8 14 L11.4 12.8 L1.8 9.2Z" fill="#f04040"/><path d="M13.1 32.7 C13.6 28.2 16.1 26.3 19.1 26.0 L23.1 26.0 C26.6 26.3 29.1 28.2 29.5 32.7 Z" fill="#a6d3e8"/><path d="M18.3 25.9 L21.200000000000003 31.7 L24.1 25.9 Z" fill="#f6f7f9"/><path d="M20.400000000000002 26.9 L22.0 26.9 L22.1 29.5 L21.200000000000003 31.3 L20.3 29.5 Z" fill="#3a3f48"/><circle cx="21.0" cy="18.8" r="4.9" fill="#f2ecf2" stroke="#d9d2dc" stroke-width="0.6"/><circle cx="19.3" cy="17.7" r="0.75" fill="#4a4a55"/><circle cx="22.700000000000003" cy="17.7" r="0.75" fill="#4a4a55"/><path d="M18.400000000000002 20.3 Q21.0 23.099999999999998 23.6 20.3" fill="none" stroke="#4a4a55" stroke-width="0.9"/></svg>
<svg style="left:802.6px;top:56.6px" width="16" height="17" viewBox="0 0 16 17" ><rect x="0.5" y="0.5" width="14.6" height="15.4" fill="none" stroke="#c4c6ca" stroke-width="1"/><g stroke="#d86a6a" stroke-width="0.8"><path d="M2.6 1 L2.6 8.4"/><path d="M4.7 1 L4.7 8.4"/><path d="M6.800000000000001 1 L6.800000000000001 8.4"/><path d="M8.9 1 L8.9 8.4"/><path d="M11.0 1 L11.0 8.4"/><path d="M13.1 1 L13.1 8.4"/><path d="M1 8.6 L14.8 8.6 M5 8.6 L5 15.6 M10.8 8.6 L10.8 15.6"/></g></svg>
<svg style="left:933.2px;top:64.19999999999999px" width="4.8" height="2.8" viewBox="0 0 4.8 2.8" ><path d="M0 0 L4.8 0 L2.4 2.8 Z" fill="#d8dbe0"/></svg>
<svg style="left:801.6px;top:80.4px" width="17" height="17" viewBox="0 0 17 17" ><path d="M9.6 0.6 L16 0.6 L16 16 L0.6 16 L0.6 10 L9.6 10 Z M9.6 10 L16 16" fill="none" stroke="#e06868" stroke-width="0.9"/><g stroke="#e8eaee" stroke-width="1" fill="#e8eaee"><path d="M12.8 12.8 L12.8 2.6 M12.8 12.8 L2.2 12.8" fill="none"/><path d="M12.8 1.2 L11.4 3.4 L14.2 3.4 Z M1 12.8 L3.2 11.4 L3.2 14.2 Z" stroke="none"/></g></svg>
<svg style="left:803px;top:105.6px" width="15" height="15" viewBox="0 0 15 15" ><path d="M0.6 8.4 L8.4 8.4 L8.4 0.4 L14 6 L14 14.4 L6 14.4 Z" fill="#7a7c80"/><rect x="1" y="0.8" width="7.4" height="7.6" fill="#d4d6dc" stroke="#f0f0f4" stroke-width="0.8"/></svg>
<svg style="left:933.8px;top:134.8px" width="6" height="6" viewBox="0 0 6 6" ><path d="M0.4 0.4 L4.6 4.6" fill="none" stroke="#d4d6da" stroke-width="1.2"/><path d="M0.4 5.3 L5.3 5.3 L5.3 0.4 Z" fill="#e6e6e6"/><path d="M0.4 4.4 L4.4 4.4 L4.4 0.4 Z" fill="#3b4453"/></svg>
<svg style="left:980.8px;top:56.7px" width="27.4" height="27.4" viewBox="0 0 27.4 27.4" ><path d="M0 27.2 L0 2.4 Q0 0.2 2.4 0.2 L24.8 0.2 Q27.2 0.2 27.2 2.4 L27.2 27.2 Z" fill="#000000"/><rect x="3.4" y="0.5" width="20.6" height="14.6" fill="#fafafa"/><rect x="3.4" y="0.5" width="20.6" height="14.6" fill="#d4d6dc"/><circle cx="11" cy="8.1" r="4.2" fill="#9acbe8" stroke="#4a4e58" stroke-width="0.9"/><rect x="19" y="1.8" width="3" height="3" fill="#9acbe8" stroke="#70747c" stroke-width="0.5"/><rect x="4.1" y="18.4" width="19" height="8.8" rx="1" fill="#ffffff"/><path d="M6.4 23 L11.4 20 L11.4 26 Z" fill="#2ea02e"/><path d="M21.4 23 L16.4 20 L16.4 26 Z" fill="#d01828"/></svg>
<svg style="left:1063.9px;top:56.7px" width="27.4" height="27.4" viewBox="0 0 27.4 27.4" ><path d="M0 27.2 L0 2.4 Q0 0.2 2.4 0.2 L24.8 0.2 Q27.2 0.2 27.2 2.4 L27.2 27.2 Z" fill="#000000"/><rect x="3.4" y="0.5" width="20.6" height="14.6" fill="#fafafa"/><text x="13.7" y="12.4" text-anchor="middle" font-family="Liberation Sans" font-size="12.5" fill="#222">SU</text><rect x="4.1" y="18.4" width="19" height="8.8" rx="1" fill="#ffffff"/><path d="M6.4 23 L11.4 20 L11.4 26 Z" fill="#2ea02e"/><path d="M21.4 23 L16.4 20 L16.4 26 Z" fill="#d01828"/></svg>
<svg style="left:1122px;top:50px" width="30" height="40" viewBox="0 0 30 40" ><text x="14.8" y="36.2" text-anchor="middle" font-family="Liberation Sans" font-size="40.5" fill="#ffee00" stroke="#ffee00" stroke-width="0.7">?</text></svg>
<svg style="left:249.8px;top:157px" width="10" height="10" viewBox="0 0 10 10" ><path d="M1 1 L8.6 8.6 M8.6 1 L1 8.6" stroke="#aeb2ba" stroke-width="1.9"/></svg>
<svg style="left:285.6px;top:158.6px" width="10" height="10" viewBox="0 0 10 10" ><path d="M4.4 0.2 L4.4 8.4 M0.3 4.3 L8.5 4.3" stroke="#aeb2ba" stroke-width="1.9"/></svg>
<svg style="left:217px;top:704.6px" width="10" height="10" viewBox="0 0 10 10" ><path d="M4.8 0.6 L4.8 9 M0.6 4.8 L9 4.8" stroke="#b4bac6" stroke-width="1.5"/></svg>
<svg style="left:1110px;top:190px" width="14" height="8" viewBox="0 0 14 8" ><rect x="0.8" y="1.4" width="12" height="4.6" rx="1" fill="#e6e6ea" stroke="#8a8a8e" stroke-width="1"/></svg>
<svg style="left:1130.5px;top:186px" width="13" height="13" viewBox="0 0 13 13" ><rect x="3.4" y="0.8" width="8.4" height="8.4" rx="1" fill="#ececf0" stroke="#8a8a8e" stroke-width="1"/><rect x="0.8" y="3.4" width="8.4" height="8.4" rx="1" fill="#ececf0" stroke="#8a8a8e" stroke-width="1"/><rect x="3.4" y="6" width="3.2" height="3.2" fill="none" stroke="#8a8a8e" stroke-width="0.9"/></svg>
<svg style="left:1150px;top:186px" width="14" height="13" viewBox="0 0 14 13" ><path d="M2 1.6 L11.6 11 M11.6 1.6 L2 11" stroke="#77777d" stroke-width="4"/><path d="M2 1.6 L11.6 11 M11.6 1.6 L2 11" stroke="#f4f4f8" stroke-width="1.8"/></svg>
<svg style="left:302px;top:677px" width="5" height="17" viewBox="0 0 5 17" ><rect x="0" y="0.20" width="2" height="1.7" fill="#f4f4f4"/><rect x="0" y="2.56" width="2" height="1.7" fill="#f4f4f4"/><rect x="0" y="4.92" width="2" height="1.7" fill="#f4f4f4"/><rect x="0" y="7.28" width="2" height="1.7" fill="#f4f4f4"/><rect x="0" y="9.64" width="2" height="1.7" fill="#f4f4f4"/><rect x="0" y="12.00" width="2" height="1.7" fill="#f4f4f4"/><rect x="0" y="14.36" width="2" height="1.7" fill="#f4f4f4"/><rect x="2.7" y="0.20" width="2" height="1.7" fill="#f4f4f4"/><rect x="2.7" y="2.56" width="2" height="1.7" fill="#f4f4f4"/><rect x="2.7" y="4.92" width="2" height="1.7" fill="#f4f4f4"/><rect x="2.7" y="7.28" width="2" height="1.7" fill="#f4f4f4"/><rect x="2.7" y="9.64" width="2" height="1.7" fill="#f4f4f4"/><rect x="2.7" y="12.00" width="2" height="1.7" fill="#f4f4f4"/><rect x="2.7" y="14.36" width="2" height="1.7" fill="#f4f4f4"/></svg>
<svg style="left:312px;top:680.4px" width="10.4" height="10.4" viewBox="0 0 10.4 10.4" ><path d="M1 1 L9.2 9.2 M9.2 1 L1 9.2" stroke="#f0f0f0" stroke-width="1.7"/></svg>
<svg style="left:333px;top:678.6px" width="16" height="16" viewBox="0 0 16 16" ><path d="M1.6 14.6 L8.4 7.6" stroke="#f4f4f4" stroke-width="2.6" stroke-linecap="round"/><path d="M13.9 3.5 L11.2 5.8 L9.4 4 L11.7 1.3 C8.6 0.4 6 3.2 7.2 6.4 L8.9 8.2 C12 9.2 14.8 6.6 13.9 3.5 Z" fill="#f4f4f4"/></svg>
<svg style="left:358px;top:681.2px" width="16" height="12" viewBox="0 0 16 12" ><rect x="0.6" y="0.6" width="14.6" height="10.4" fill="#f4f4f4" stroke="#8a8a8a" stroke-width="1"/><rect x="0.6" y="0.6" width="14.6" height="2" fill="#8a8a8a"/><path d="M3 5.2 L5.4 6.9 L3 8.6 M6.6 8.8 L10 8.8" stroke="#6a6a6a" stroke-width="0.9" fill="none"/></svg>
<svg style="left:376.1px;top:685.0px" width="7" height="3.6" viewBox="0 0 7 3.6" ><path d="M0 0 L7 0 L3.5 3.6 Z" fill="#7c7c7c"/></svg>
<svg style="left:866px;top:682.5px" width="8" height="5" viewBox="0 0 8 5" ><path d="M0.4 4.6 L7.4 4.6 L3.9 0.4 Z" fill="#9a9a9a"/></svg>
<svg style="left:631px;top:706px" width="17" height="17" viewBox="0 0 17 17" ><path d="M4.4 0.4 L4.4 16.4 M8.4 0.4 L8.4 16.4 M12.4 0.4 L12.4 16.4 M0.4 4.4 L16.4 4.4 M0.4 8.4 L16.4 8.4 M0.4 12.4 L16.4 12.4" stroke="#e6e8ec" stroke-width="1.1"/></svg>
<svg style="left:657.9px;top:707.9px" width="13" height="13" viewBox="0 0 13 13" ><rect x="0" y="0" width="2.2" height="2.2" fill="#e6e8ec"/><rect x="0" y="5.1" width="2.2" height="2.2" fill="#e6e8ec"/><rect x="0" y="10.2" width="2.2" height="2.2" fill="#e6e8ec"/><rect x="5.1" y="0" width="2.2" height="2.2" fill="#e6e8ec"/><rect x="5.1" y="5.1" width="2.2" height="2.2" fill="#e6e8ec"/><rect x="5.1" y="10.2" width="2.2" height="2.2" fill="#e6e8ec"/><rect x="10.2" y="0" width="2.2" height="2.2" fill="#e6e8ec"/><rect x="10.2" y="5.1" width="2.2" height="2.2" fill="#e6e8ec"/><rect x="10.2" y="10.2" width="2.2" height="2.2" fill="#e6e8ec"/></svg>
<svg style="left:680.2px;top:712.0px" width="8" height="4.4" viewBox="0 0 8 4.4" ><path d="M0 0 L8 0 L4.0 4.4 Z" fill="#d0d4da"/></svg>
<svg style="left:698px;top:706px" width="18" height="17" viewBox="0 0 18 17" ><path d="M1.4 0.4 L1.4 15.4 L16.6 15.4 M1.4 10.4 L6.4 10.4 L6.4 15.4" fill="none" stroke="#e6e8ec" stroke-width="1.2"/></svg>
<svg style="left:722px;top:706px" width="18" height="17" viewBox="0 0 18 17" ><circle cx="7.6" cy="9" r="6.4" fill="none" stroke="#e6e8ec" stroke-width="1.2"/><path d="M7.6 9 L17 9 M7.6 9 L14.2 1.4" stroke="#e6e8ec" stroke-width="1.1" fill="none"/></svg>
<svg style="left:747.0px;top:712.0px" width="8" height="4.4" viewBox="0 0 8 4.4" ><path d="M0 0 L8 0 L4.0 4.4 Z" fill="#d0d4da"/></svg>
<svg style="left:763px;top:705.6px" width="15" height="18" viewBox="0 0 15 18" ><path d="M1 1.4 L13.6 16.4" stroke="#e04848" stroke-width="1.2"/><path d="M6.8 0.6 L6.8 17.4" stroke="#48c048" stroke-width="1.2"/><rect x="5.7" y="6.8" width="2.4" height="2.4" fill="#ffffff"/></svg>
<svg style="left:787.0px;top:712.0px" width="8" height="4.4" viewBox="0 0 8 4.4" ><path d="M0 0 L8 0 L4.0 4.4 Z" fill="#d0d4da"/></svg>
<svg style="left:803px;top:705px" width="18" height="18" viewBox="0 0 18 18" ><path d="M1.4 15.2 L16.6 15.2 M3 14.4 L15.4 3" stroke="#ffffff" stroke-width="1.3" fill="none"/><rect x="7.4" y="8.2" width="2.6" height="2.6" fill="#ffffff"/></svg>
<svg style="left:826.6px;top:705px" width="19" height="18" viewBox="0 0 19 18" ><rect x="3.6" y="3.8" width="13.4" height="12.6" fill="none" stroke="#ffffff" stroke-width="1.3"/><rect x="1" y="1.2" width="4.8" height="4.8" fill="#5a8bc6" stroke="#ffffff" stroke-width="1.2"/></svg>
<svg style="left:851.8px;top:712.0px" width="8" height="4.4" viewBox="0 0 8 4.4" ><path d="M0 0 L8 0 L4.0 4.4 Z" fill="#d0d4da"/></svg>
<svg style="left:871px;top:706.7px" width="20" height="18" viewBox="0 0 20 18" ><path d="M5.8 0 L8.4 0 L10.9 6.4 L9.9 7.6 L14.1 15.3 L7.05 10.9 L0 15.3 L4.3 7.6 L3.3 6.4 Z" fill="#ffffff"/><circle cx="13.4" cy="3.4" r="2.5" fill="none" stroke="#ffffff" stroke-width="1"/></svg>
<svg style="left:895px;top:706.7px" width="20" height="18" viewBox="0 0 20 18" ><path d="M5.8 0 L8.4 0 L10.9 6.4 L9.9 7.6 L14.1 15.3 L7.05 10.9 L0 15.3 L4.3 7.6 L3.3 6.4 Z" fill="#d8dade"/><path d="M14 0 L10.6 4.2 L12.8 4.2 L10.8 7.6 L15.4 3 L13.2 3 L15 0 Z" fill="#d8dade"/></svg>
<svg style="left:920.1px;top:706.7px" width="17" height="18" viewBox="0 0 17 18" ><path d="M5.8 0 L8.4 0 L10.9 6.4 L9.9 7.6 L14.1 15.3 L7.05 10.9 L0 15.3 L4.3 7.6 L3.3 6.4 Z" fill="#d8dade"/></svg>
<svg style="left:961.0px;top:712.0px" width="8" height="4.4" viewBox="0 0 8 4.4" ><path d="M0 0 L8 0 L4.0 4.4 Z" fill="#d0d4da"/></svg>
<svg style="left:979.5px;top:706px" width="16" height="16" viewBox="0 0 16 16" ><g transform="translate(8,8)"><rect x="-1.7" y="-7.7" width="3.4" height="3.6" transform="rotate(0)" fill="#e2e4e8"/><rect x="-1.7" y="-7.7" width="3.4" height="3.6" transform="rotate(45)" fill="#e2e4e8"/><rect x="-1.7" y="-7.7" width="3.4" height="3.6" transform="rotate(90)" fill="#e2e4e8"/><rect x="-1.7" y="-7.7" width="3.4" height="3.6" transform="rotate(135)" fill="#e2e4e8"/><rect x="-1.7" y="-7.7" width="3.4" height="3.6" transform="rotate(180)" fill="#e2e4e8"/><rect x="-1.7" y="-7.7" width="3.4" height="3.6" transform="rotate(225)" fill="#e2e4e8"/><rect x="-1.7" y="-7.7" width="3.4" height="3.6" transform="rotate(270)" fill="#e2e4e8"/><rect x="-1.7" y="-7.7" width="3.4" height="3.6" transform="rotate(315)" fill="#e2e4e8"/><circle r="5.6" fill="#e2e4e8"/><circle r="2.3" fill="#3b4453"/></g></svg>
<svg style="left:1003.8px;top:712.0px" width="8" height="4.4" viewBox="0 0 8 4.4" ><path d="M0 0 L8 0 L4.0 4.4 Z" fill="#d0d4da"/></svg>
<svg style="left:1021px;top:706px" width="17" height="17" viewBox="0 0 17 17" ><path d="M8.2 0.4 L8.2 16.2 M0.4 8.3 L16.2 8.3" stroke="#f0f0f0" stroke-width="1.7"/></svg>
<svg style="left:1047.6px;top:705.6px" width="18" height="18" viewBox="0 0 18 18" ><rect x="0.8" y="0.8" width="6.4" height="6.4" fill="none" stroke="#e2e4e8" stroke-width="1.1"/><circle cx="13.2" cy="6.6" r="3.1" fill="none" stroke="#e2e4e8" stroke-width="1.1"/><path d="M6.8 10.6 L10.4 16.8 L3.2 16.8 Z" fill="none" stroke="#e2e4e8" stroke-width="1.1"/></svg>
<svg style="left:1073.4px;top:704.6px" width="19" height="19" viewBox="0 0 19 19" ><circle cx="9.5" cy="9.5" r="8" fill="#8db4e0" stroke="#ffffff" stroke-width="1.5"/><path d="M9.6 12.4 L14 5.4" stroke="#ffffff" stroke-width="1.6"/></svg>
<svg style="left:1099.5px;top:704.6px" width="20" height="19" viewBox="0 0 20 19" ><rect x="3.4" y="3.2" width="12.4" height="12.4" fill="#3a6ab0"/><rect x="1" y="8.6" width="7" height="7.2" fill="#f0a818"/><path d="M3.4 0.6 L3.4 6.6 M0.6 3.4 L6.6 3.4" stroke="#ffffff" stroke-width="1.1"/><circle cx="3.4" cy="3.4" r="1.4" fill="#3b4453" stroke="#ffffff" stroke-width="0.8"/><path d="M9.2 12.4 L12.4 15.8 L18.6 9.2" fill="none" stroke="#3cb84a" stroke-width="2.4"/></svg>
<svg style="left:1127px;top:707px" width="16" height="13" viewBox="0 0 16 13" ><rect x="0.6" y="0.6" width="14.6" height="11.2" fill="none" stroke="#e6e8ec" stroke-width="1.1"/><path d="M8.8 5.6 L12.6 2.8 M10 2.6 L12.8 2.6 L12.8 5.2 M7 6.8 L3.2 9.6 M5.8 9.8 L3 9.8 L3 7.2" fill="none" stroke="#e6e8ec" stroke-width="1"/></svg>
<svg style="left:1150.8px;top:706.4px" width="17" height="16" viewBox="0 0 17 16" ><path d="M0.2 1.6 L16.4 1.6 M0.2 7.8 L16.4 7.8 M0.2 14 L16.4 14" stroke="#f0f0f0" stroke-width="1.7"/></svg>
<svg style="left:1050px;top:230px" width="127" height="80" viewBox="0 0 127 80" ><ellipse cx="60.7" cy="53.1" rx="47.5" ry="17.4" fill="#fcfcfc" stroke="#f7f7f7" stroke-width="1"/>
<ellipse cx="60.7" cy="53.1" rx="37" ry="12.6" fill="#ffffff" stroke="#f4f4f4" stroke-width="0.8"/>
<defs><linearGradient id="vl" x1="0" x2="0" y1="0" y2="1"><stop offset="0" stop-color="#d9d9d9"/><stop offset="1" stop-color="#c9c9c9"/></linearGradient><linearGradient id="vr" x1="0" x2="0" y1="0" y2="1"><stop offset="0" stop-color="#e9e9e9"/><stop offset="1" stop-color="#d4d4d4"/></linearGradient></defs>
<path d="M35.2 15.6 L60.7 10.3 L85.7 14.9 L63.7 20.7 Z" fill="#e6e6e6"/>
<path d="M35.2 15.6 L63.7 20.7 L63.7 57.1 L36.6 48.5 Z" fill="url(#vl)"/>
<path d="M63.7 20.7 L85.7 14.9 L84.6 45 L63.7 57.1 Z" fill="url(#vr)"/>
<path d="M35.2 15.6 L60.7 10.3 L85.7 14.9 L63.7 20.7 Z M63.7 20.7 L63.7 57.1" fill="none" stroke="#a8a8a8" stroke-width="0.7" stroke-dasharray="3 2"/>
<rect x="59" y="27" width="6.4" height="22" fill="#c4c6d2" opacity="0.75"/>
<text transform="translate(41,39.4) skewY(10) scale(0.62,1)" font-family="Liberation Sans" font-size="9.5" fill="#85858f">LINKS</text>
<text transform="translate(66.8,38.6) skewY(-14) scale(0.48,1)" font-family="Liberation Sans" font-size="9.5" fill="#7c7c7c">VORNE</text>
<text transform="translate(57,16.6) scale(0.8,0.5) skewX(-30)" font-family="Liberation Sans" font-size="8" fill="#a0a0a0">OBEN</text>
<g stroke="#b8b8b8" stroke-width="0.7" fill="none"><path d="M23 42.6 l12 -0.6 M28 40.4 l1.4 3.8 M26 43.8 l5 -2.6"/><path d="M18.4 66 l20 -3.4 M23 63 l10 4.6 M27 61.4 l4 7 M22 67.6 l8 -5"/><path d="M93.6 61 l6 2.4 q1 -2.6 -2.4 -2.8 Z M99.6 63.2 l5 0.6 q2 -1.6 -0.6 -2.4"/><path d="M85.4 41.8 l5 -1.6 M88 39.6 l2.4 2.2"/></g></svg>
<svg style="left:1087.4px;top:327px" width="46" height="15.6" viewBox="0 0 46 15.6" ><rect x="0.2" y="0.2" width="45.4" height="15" rx="3.4" fill="#e9e9f3"/><path d="M31.6 5.2 L40.4 5.2 L36 10.4 Z" fill="none" stroke="#b4b4c0" stroke-width="0.9"/></svg>
<svg style="left:1136px;top:368px" width="35" height="214" viewBox="0 0 35 214" ><rect x="0.5" y="0.5" width="33.6" height="213" rx="3" fill="#efefef" stroke="#cdcdcd" stroke-width="1"/>
<circle cx="27.4" cy="6.2" r="2.7" fill="none" stroke="#d2d2d2" stroke-width="0.8"/><path d="M25.8 4.6 l3.2 3.2 M29 4.6 l-3.2 3.2" stroke="#d2d2d2" stroke-width="0.7"/>
<circle cx="17.2" cy="31.4" r="10.3" fill="none" stroke="#d2d2d2" stroke-width="1.1"/><circle cx="17.2" cy="31.4" r="5.8" fill="none" stroke="#d2d2d2" stroke-width="1.1"/><path d="M17 21 L27 21 L27.6 31" fill="none" stroke="#d2d2d2" stroke-width="1.1"/>
<path d="M15.4 50.6 L19.6 50.6 L17.5 53 Z" fill="#d2d2d2"/>
<path d="M4 57.2 L30.4 57.2" stroke="#d2d2d2" stroke-width="0.9"/>
<path d="M8 74 C6 70 10 69 12 72.6 L12 65.6 C12 63.4 14.6 63.4 14.6 65.6 L14.8 63.8 C15 61.6 17.6 61.8 17.6 64 L17.8 64.4 C18 62.4 20.6 62.6 20.6 64.8 L20.8 66.6 C21.2 64.8 23.6 65 23.6 67.2 L23.6 75 C23.6 80 21 83.4 17 83.4 C13 83.4 10.4 80 8 74 Z" fill="none" stroke="#d2d2d2" stroke-width="1"/>
<path d="M6 91.6 L17.6 103.6 M17 91.6 L5.6 103.6 M6 95 L6 91.6 L9.4 91.6 M13.8 91.6 L17 91.6 L17 95 M5.6 100.2 L5.6 103.6 L9 103.6" fill="none" stroke="#d2d2d2" stroke-width="1"/><circle cx="21.6" cy="106.4" r="4" fill="none" stroke="#d2d2d2" stroke-width="1.1"/><path d="M24.6 109.6 L28.4 114" stroke="#d2d2d2" stroke-width="1.8"/>
<path d="M15.4 119.6 L19.6 119.6 L17.5 122 Z" fill="#d2d2d2"/>
<ellipse cx="17" cy="141.4" rx="11" ry="4.6" fill="none" stroke="#d2d2d2" stroke-width="1"/><path d="M15 148.6 L15 133 L12.4 133 L17 126.6 L21.6 133 L19 133 L19 148.6 Z" fill="#efefef" stroke="#d2d2d2" stroke-width="1"/><path d="M10.4 143.4 L13.8 145.6 L10 147.6" fill="none" stroke="#d2d2d2" stroke-width="1"/>
<path d="M15.4 157.6 L19.6 157.6 L17.5 160 Z" fill="#d2d2d2"/>
<path d="M4 164.8 L30.4 164.8" stroke="#d2d2d2" stroke-width="0.9"/>
<rect x="5.6" y="170.4" width="6.4" height="5.8" fill="none" stroke="#d2d2d2" stroke-width="0.9"/><rect x="13.2" y="170.4" width="6.4" height="5.8" fill="none" stroke="#d2d2d2" stroke-width="0.9"/><rect x="21.2" y="170.4" width="6.4" height="5.8" fill="none" stroke="#d2d2d2" stroke-width="0.9"/>
<rect x="5.6" y="179.6" width="16.6" height="13" fill="none" stroke="#d2d2d2" stroke-width="1"/><path d="M11 182.6 L18 186.2 L11 189.8 Z" fill="#d2d2d2"/>
<circle cx="28" cy="206.4" r="2.8" fill="none" stroke="#d2d2d2" stroke-width="0.8"/><path d="M26.4 205.6 L29.6 205.6 L28 207.8 Z" fill="#d2d2d2"/></svg>
<span class="t" id="t0" style="left:288.05px;top:6.80px;font-size:13px;line-height:16px;color:#eef0f3;transform:scaleX(0.9127);">Zeichnen und Beschrift...</span>
<span class="t" id="t1" style="left:478.89px;top:6.80px;font-size:13px;line-height:16px;color:#8d96a7;transform:scaleX(0.8983);">sketchup_BSP.dwg</span>
<span class="t" id="t2" style="left:611.05px;top:8.02px;font-size:11.5px;line-height:14px;color:#c3c8d1;transform:scaleX(0.9204);font-style:italic;">Stichwort oder Frage eingeben</span>
<span class="t" id="t3" style="left:836.19px;top:8.10px;font-size:13px;line-height:16px;color:#eef0f3;transform:scaleX(0.9409);">NorbertLinda</span>
<span class="t" id="t4" style="left:58.88px;top:31.54px;font-size:12px;line-height:15px;color:#c4c9d2;transform:scaleX(0.9396);">Start</span>
<span class="t" id="t5" style="left:102.75px;top:31.54px;font-size:12px;line-height:15px;color:#c4c9d2;transform:scaleX(1.0061);">Einfügen</span>
<span class="t" id="t6" style="left:169.95px;top:31.54px;font-size:12px;line-height:15px;color:#c4c9d2;transform:scaleX(0.9987);">Beschriften</span>
<span class="t" id="t7" style="left:248.96px;top:31.54px;font-size:12px;line-height:15px;color:#c4c9d2;transform:scaleX(0.9901);">Parametrisch</span>
<span class="t" id="t8" style="left:337.8px;top:31.54px;font-size:12px;line-height:15px;color:#c4c9d2;transform:scaleX(1.0112);">Ansicht</span>
<span class="t" id="t9" style="left:398.2px;top:31.54px;font-size:12px;line-height:15px;color:#c4c9d2;transform:scaleX(0.9726);">Verwalten</span>
<span class="t" id="t10" style="left:468.8px;top:31.54px;font-size:12px;line-height:15px;color:#c4c9d2;transform:scaleX(0.9785);">Ausgabe</span>
<span class="t" id="t11" style="left:535.99px;top:31.54px;font-size:12px;line-height:15px;color:#c4c9d2;transform:scaleX(1.0373);">Add-ins</span>
<span class="t" id="t12" style="left:596.65px;top:31.54px;font-size:12px;line-height:15px;color:#c4c9d2;transform:scaleX(1.0012);">Zusammenarbeiten</span>
<span class="t" id="t13" style="left:720.0px;top:31.54px;font-size:12px;line-height:15px;color:#c4c9d2;transform:scaleX(0.9810);">Verfügbare Apps</span>
<span class="t" id="t14" style="left:827.4px;top:31.54px;font-size:12px;line-height:15px;color:#c4c9d2;transform:scaleX(0.8799);">WSLC2021</span>
<span class="t" id="t15" style="left:901.94px;top:31.54px;font-size:12px;line-height:15px;color:#c4c9d2;transform:scaleX(0.9983);">Landcad</span>
<span class="t" id="t16" style="left:966.77px;top:31.54px;font-size:12px;line-height:15px;color:#c4c9d2;transform:scaleX(1.0136);">Bauleitplanung</span>
<span class="t" id="t17" style="left:1066.77px;top:31.54px;font-size:12px;line-height:15px;color:#f2f3f5;transform:scaleX(1.0130);">Entwurf</span>
<span class="t" id="t18" style="left:11.49px;top:91.64px;font-size:12px;line-height:15px;color:#e4e7ec;transform:scaleX(0.9967);">Schraffurmanager...</span>
<span class="t" id="t19" style="left:144.49px;top:57.94px;font-size:12px;line-height:15px;color:#e4e7ec;transform:scaleX(0.9983);">Schraffur schieben/drehen</span>
<span class="t" id="t20" style="left:144.49px;top:81.74px;font-size:12px;line-height:15px;color:#e4e7ec;transform:scaleX(0.9850);">Schraffur editieren...</span>
<span class="t" id="t21" style="left:305.18px;top:91.64px;font-size:12px;line-height:15px;color:#e4e7ec;transform:scaleX(1.0038);">Linienmustermanager...</span>
<span class="t" id="t22" style="left:444.29px;top:91.64px;font-size:12px;line-height:15px;color:#e4e7ec;transform:scaleX(1.0051);">Symbollinienmanager...</span>
<span class="t" id="t23" style="left:597.96px;top:57.94px;font-size:12px;line-height:15px;color:#e4e7ec;transform:scaleX(1.0107);">Kurvenlinieal</span>
<span class="t" id="t24" style="left:598.24px;top:81.74px;font-size:12px;line-height:15px;color:#e4e7ec;transform:scaleX(0.9896);">Topographie...</span>
<span class="t" id="t25" style="left:691.69px;top:91.64px;font-size:12px;line-height:15px;color:#e4e7ec;transform:scaleX(0.9759);">Gebäudemanager...</span>
<span class="t" id="t26" style="left:823.49px;top:57.94px;font-size:12px;line-height:15px;color:#e4e7ec;transform:scaleX(0.9897);">Satteldachschraffur</span>
<span class="t" id="t27" style="left:822.94px;top:81.74px;font-size:12px;line-height:15px;color:#e4e7ec;transform:scaleX(0.9897);">Firstlinie...</span>
<span class="t" id="t28" style="left:823.48px;top:105.74px;font-size:12px;line-height:15px;color:#e4e7ec;transform:scaleX(0.9935);">Schattenwurf...</span>
<span class="t" id="t29" style="left:949.59px;top:91.64px;font-size:12px;line-height:15px;color:#e4e7ec;transform:scaleX(1.0122);">Bildbearbeitung...</span>
<span class="t" id="t30" style="left:1048.29px;top:91.64px;font-size:12px;line-height:15px;color:#e4e7ec;transform:scaleX(0.9784);">SketchUp...</span>
<span class="t" id="t31" style="left:1117.75px;top:91.64px;font-size:12px;line-height:15px;color:#e4e7ec;transform:scaleX(1.0620);">Hilfe...</span>
<span class="t" id="t32" style="left:112.1px;top:130.14px;font-size:12px;line-height:15px;color:#d2d6dd;transform:scaleX(0.9967);">Schraffuren</span>
<span class="t" id="t33" style="left:466.72px;top:130.14px;font-size:12px;line-height:15px;color:#d2d6dd;transform:scaleX(1.0319);">Linien</span>
<span class="t" id="t34" style="left:785.28px;top:130.14px;font-size:12px;line-height:15px;color:#d2d6dd;transform:scaleX(0.9561);">Gebäude</span>
<span class="t" id="t35" style="left:992.29px;top:130.14px;font-size:12px;line-height:15px;color:#d2d6dd;transform:scaleX(1.0076);">Schnittstellen</span>
<span class="t" id="t36" style="left:1123.16px;top:130.14px;font-size:12px;line-height:15px;color:#d2d6dd;transform:scaleX(1.0949);">Hilfe</span>
<span class="t" id="t37" style="left:36.28px;top:155.54px;font-size:12px;line-height:15px;color:#a9b0bc;transform:scaleX(0.9338);">Start</span>
<span class="t" id="t38" style="left:159.45px;top:155.54px;font-size:12px;line-height:15px;color:#f0f1f4;transform:scaleX(0.9300);">sketchup_BSP*</span>
<span class="t" id="t39" style="left:7.55px;top:183.94px;font-size:12px;line-height:15px;color:#1d1d1d;transform:scaleX(0.9919);">[<span style='display:inline-block;width:9.6px;text-align:center;transform:scaleX(1.25)'>−</span>][Benutzerdefinierte Ansicht][Realistisch]</span>
<span class="t" id="t40" style="left:389.25px;top:679.68px;font-size:11.7px;line-height:15px;color:#8a8a8a;transform:scaleX(1.0032);font-family:'Liberation Mono';font-style:italic;">Befehl eingeben</span>
<span class="t" id="t41" style="left:26.72px;top:701.84px;font-size:12px;line-height:15px;color:#ffffff;transform:scaleX(1.0674);font-weight:bold;">Modell</span>
<span class="t" id="t42" style="left:87.17px;top:701.84px;font-size:12px;line-height:15px;color:#b4bac5;transform:scaleX(1.0153);">Layout1</span>
<span class="t" id="t43" style="left:151.75px;top:701.84px;font-size:12px;line-height:15px;color:#b4bac5;transform:scaleX(1.0307);">Layout2</span>
<span class="t" id="t44" style="left:403.74px;top:706.00px;font-size:13px;line-height:16px;color:#eef0f3;transform:scaleX(0.9104);">1419.9960, 1233.0591, 0.0000</span>
<span class="t" id="t45" style="left:575.17px;top:706.00px;font-size:13px;line-height:16px;color:#eef0f3;transform:scaleX(0.8872);">MODELL</span>
<span class="t" id="t46" style="left:943.47px;top:707.32px;font-size:11.5px;line-height:14px;color:#eef0f3;transform:scaleX(0.8086);font-weight:bold;">1:1</span>
<span class="t" id="t47" style="left:1091.0px;top:327.49px;font-size:11px;line-height:14px;color:#9ea1a8;transform:scaleX(0.9381);">WKS</span>
</div></body></html>
